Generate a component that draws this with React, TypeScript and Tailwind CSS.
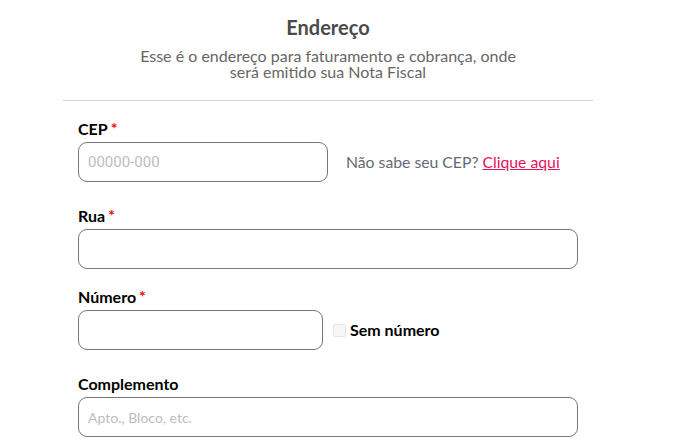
import React from "react";

const Label = ({ text, req }: { text: string; req?: boolean }) => (
  <div className="h-[20px] text-[16px] leading-[20px] font-bold text-black">
    {text}
    {req && <span className="ml-[3px] text-[16px] align-top leading-[18px] text-[#ff0000]">*</span>}
  </div>
);

export default function App() {
  return (
    <div className="w-[693px] h-[448px] bg-white overflow-hidden" style={{ fontFamily: "Lato, 'Noto Sans', sans-serif" }}>
      <div className="ml-[63px] w-[530px]">
        <div className="pt-[15px] text-center">
          <div className="text-[20px] leading-[24px] font-bold text-[#4a4a4a]">Endereço</div>
          <div className="mt-[9px] text-[16px] leading-[16px] text-[#666666]">
            <div>Esse é o endereço para faturamento e cobrança, onde</div>
            <div>será emitido sua Nota Fiscal</div>
          </div>
        </div>
        <div className="mt-[20px] h-px bg-[#d6d6d6]" />
        <div className="px-[15px] pt-[18px]">
          <Label text="CEP" req />
          <div className="mt-[3px] flex items-center">
            <div className="w-[250px] h-[40px] rounded-[9px] border border-[#777777] flex items-center px-[9px] text-[15px] text-[#bdbdbd]" style={{ fontFamily: "Roboto, sans-serif" }}>
              00000-000
            </div>
            <div className="ml-[18px] text-[15.75px] text-[#656a72]">
              Não sabe seu CEP? <span className="text-[#e5105e] underline">Clique aqui</span>
            </div>
          </div>
          <div className="mt-[24px]">
            <Label text="Rua" req />
          </div>
          <div className="mt-[3px] w-[500px] h-[40px] rounded-[9px] border border-[#777777]" />
          <div className="mt-[18px]">
            <Label text="Número" req />
          </div>
          <div className="mt-[3px] flex items-center">
            <div className="w-[245px] h-[40px] rounded-[9px] border border-[#777777]" />
            <div className="ml-[10px] w-[13px] h-[13px] rounded-[2px] border border-[#e6e6e6] bg-[#f7f7f7]" />
            <div className="ml-[4px] text-[16px] font-bold text-black">Sem número</div>
          </div>
          <div className="mt-[24px]">
            <Label text="Complemento" />
          </div>
          <div className="mt-[3px] w-[500px] h-[40px] rounded-[9px] border border-[#777777] flex items-center px-[9px] text-[14px] text-[#bdbdbd]">
            Apto., Bloco, etc.
          </div>
        </div>
      </div>
    </div>
  );
}
